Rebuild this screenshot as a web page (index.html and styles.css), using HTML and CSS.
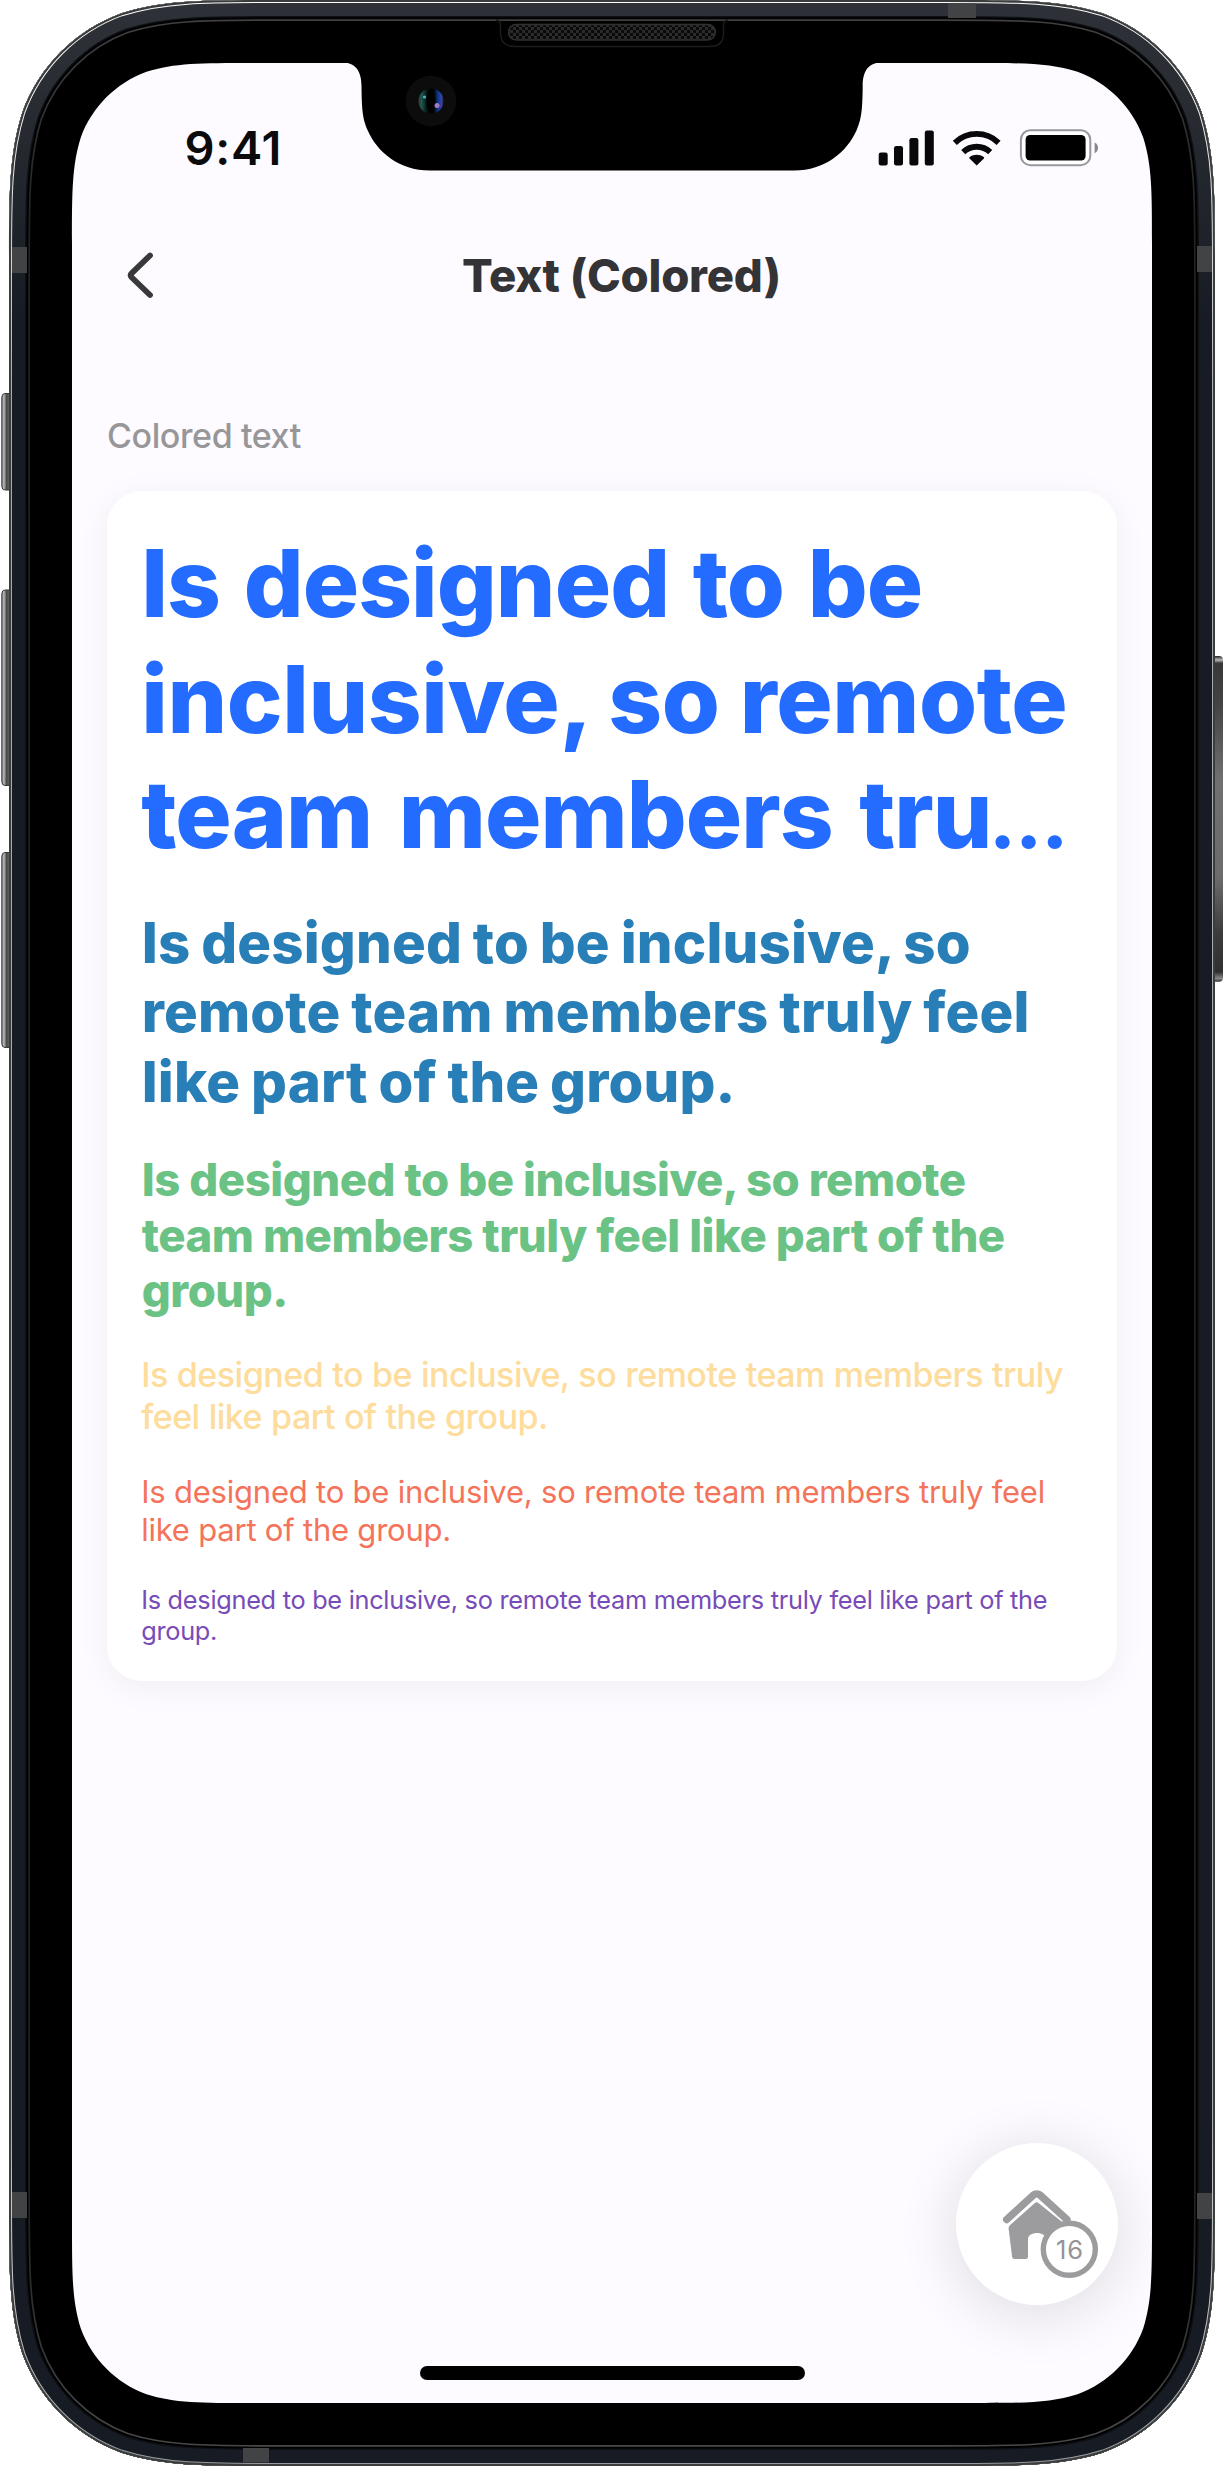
FILE: index.html
```html
<!DOCTYPE html>
<html lang="en">
<head>
<meta charset="utf-8">
<title>Text (Colored)</title>
<link rel="stylesheet" href="styles.css">
</head>
<body>
<div class="phone">
  <main class="screen">
    <div class="status">
      <span class="clock">9:41</span>
      <svg class="status-icons" width="222" height="40" viewBox="877 128 222 40" aria-hidden="true">
        <g fill="#08080a">
          <rect x="878.7" y="152.6" width="9" height="12.8" rx="2.2"/>
          <rect x="894" y="146" width="9" height="19.4" rx="2.2"/>
          <rect x="909.4" y="138" width="9" height="27.4" rx="2.2"/>
          <rect x="924.8" y="130.4" width="9" height="35" rx="2.2"/>
          <path d="M976.7 165.4l-7.2-6.8a1 1 0 0 1 .2-1.5c4.2-3.1 9.8-3.1 14 0a1 1 0 0 1 .2 1.5z"/>
        </g>
        <g fill="none" stroke="#08080a" stroke-width="5.8">
          <path d="M963.2 152.2a19.4 19.4 0 0 1 27 0"/>
          <path d="M954.8 142.8a31.5 31.5 0 0 1 43.8 0"/>
        </g>
        <rect x="1020.9" y="130.2" width="69.4" height="35" rx="9.5" fill="#fff" stroke="#98979b" stroke-width="2"/>
        <rect x="1025.6" y="135" width="60" height="25.6" rx="4.6" fill="#000"/>
        <path d="M1094.6 142.6c4.6 2 4.6 8.6 0 10.6z" fill="#88878b"/>
      </svg>
    </div>
    <header class="nav">
      <svg class="back" width="32" height="48" viewBox="124 251 32 48" aria-hidden="true">
        <path d="M150 255.5L131.3 273.6a2.3 2.3 0 0 0 0 3.4l18.7 18" fill="none" stroke="#39383b" stroke-width="5.8" stroke-linecap="round"/>
      </svg>
      <h1 class="title">Text (Colored)</h1>
    </header>
    <h2 class="caption">Colored text</h2>
    <section class="card">
      <p class="display">Is designed to be<br><span class="wide">inclusive, so remote</span><br><span class="last">team members tru<span class="dots">…</span></span></p>
      <p class="heading">Is designed to be inclusive, so<br>remote team members truly feel<br>like part of the group.</p>
      <p class="subheading">Is designed to be inclusive, so remote<br>team members truly feel like part of the<br>group.</p>
      <p class="body">Is designed to be inclusive, so remote team members truly<br>feel like part of the group.</p>
      <p class="callout">Is designed to be inclusive, so remote team members truly feel<br>like part of the group.</p>
      <p class="footnote">Is designed to be inclusive, so remote team members truly feel like part of the<br>group.</p>
    </section>
    <div class="fab">
      <svg width="162" height="162" viewBox="956 2143 162 162" aria-hidden="true">
        <path d="M1034.6 2203.2a3 3 0 0 1 4.2 0l25.2 20.3v35.3h-18.3v-19.5c0-4-4-6.2-8.7-6.2s-9 2.2-9 6.2v17.2q0 2.5-2.6 2.5h-10.8q-2.3 0-2.5-2.3l-3.5-28q-.2-2 1.5-3.7z" fill="#9c9b9e"/>
        <path d="M1006.7 2219.5l26.8-24.4a5 5 0 0 1 6.6 0l26.8 24.4" fill="none" stroke="#9c9b9e" stroke-width="7.4" stroke-linecap="round"/>
        <circle cx="1069.3" cy="2249.2" r="26" fill="#fff" stroke="#9c9b9e" stroke-width="5.4"/>
      </svg>
      <span class="count">16</span>
    </div>
    <div class="indicator"></div>
  </main>
  <svg class="frame" width="1224" height="2466" viewBox="0 0 1224 2466" aria-hidden="true">
    <defs>
      <path id="body" d="M9 272.1c0-78.4 0-117.5 13.3-159.7c16.8-46 53-82.3 99.1-99.1c42.2-13.3 81.3-13.3 159.7-13.3H942.9c78.4 0 117.5 0 159.7 13.3c46 16.8 82.3 53 99.1 99.1c13.3 42.2 13.3 81.3 13.3 159.7V2193.9c0 78.4 0 117.5-13.3 159.7c-16.8 46-53 82.3-99.1 99.1c-42.2 13.3-81.3 13.3-159.7 13.3H281.1c-78.4 0-117.5 0-159.7-13.3c-46-16.8-82.3-53-99.1-99.1c-13.3-42.2-13.3-81.3-13.3-159.7z"/>
      <clipPath id="bodyClip"><use href="#body"/></clipPath>
      <linearGradient id="navy" gradientUnits="userSpaceOnUse" x1="0" y1="0" x2="0" y2="320">
        <stop offset="0" stop-color="#2e3137"/><stop offset=".3" stop-color="#292c32"/><stop offset="1" stop-color="#171c24"/>
      </linearGradient>
      <linearGradient id="shine" gradientUnits="userSpaceOnUse" x1="0" y1="0" x2="0" y2="2466">
        <stop offset="0" stop-color="#fff"/><stop offset=".1" stop-color="#d5d8da"/><stop offset=".16" stop-color="#a9abb2"/><stop offset=".86" stop-color="#a9abb2"/><stop offset=".91" stop-color="#d0d0d0"/><stop offset="1" stop-color="#96999c"/>
      </linearGradient>
      <linearGradient id="seam" gradientUnits="userSpaceOnUse" x1="0" y1="0" x2="0" y2="2466">
        <stop offset="0" stop-color="#434343"/><stop offset=".09" stop-color="#222"/><stop offset=".9" stop-color="#222"/><stop offset="1" stop-color="#4c4c4c"/>
      </linearGradient>
      <linearGradient id="left" x1="0" x2="1" y1="0" y2="0">
        <stop offset="0" stop-color="#777"/><stop offset=".22" stop-color="#b4b7b7"/><stop offset=".4" stop-color="#8f9191"/><stop offset=".55" stop-color="#494949"/><stop offset="1" stop-color="#686868"/>
      </linearGradient>
      <linearGradient id="right" x1="0" x2="0" y1="0" y2="1">
        <stop offset="0" stop-color="#222"/><stop offset=".012" stop-color="#bbb"/><stop offset=".022" stop-color="#383838"/><stop offset=".15" stop-color="#444"/><stop offset=".38" stop-color="#707070"/><stop offset=".68" stop-color="#6c6c6c"/><stop offset=".85" stop-color="#3c3c3c"/><stop offset=".97" stop-color="#303030"/><stop offset=".99" stop-color="#888"/><stop offset="1" stop-color="#333"/>
      </linearGradient>
      <linearGradient id="lens" x1="0" x2="1" y1="0" y2="0">
        <stop offset="0" stop-color="#333"/><stop offset=".12" stop-color="#1d5a50"/><stop offset=".35" stop-color="#04100f"/><stop offset=".6" stop-color="#000"/><stop offset=".78" stop-color="#0b3a86"/><stop offset=".92" stop-color="#3b3fb0"/><stop offset="1" stop-color="#222"/>
      </linearGradient>
      <pattern id="mesh" width="6" height="6" patternUnits="userSpaceOnUse">
        <rect width="6" height="6" fill="#0a0a0a"/><rect width="3" height="3" fill="#2b2b2b"/><rect x="3" y="3" width="3" height="3" fill="#2b2b2b"/>
      </pattern>
    </defs>
    <g fill="url(#left)" stroke="#3b3d3d" stroke-width="1">
      <path d="M10 393.5H5q-3.2 0-3.2 4v88.5q0 4 3.2 4h5z"/>
      <path d="M10 590H5q-3.2 0-3.2 4v187.5q0 4 3.2 4h5z"/>
      <path d="M10 852.5H5q-3.2 0-3.2 4v187q0 4 3.2 4h5z"/>
    </g>
    <path d="M1214 656h5q4 0 4 4v317.7q0 4-4 4h-5z" fill="url(#right)"/>
    <path fill-rule="evenodd" d="M9 272.1c0-78.4 0-117.5 13.3-159.7c16.8-46 53-82.3 99.1-99.1c42.2-13.3 81.3-13.3 159.7-13.3H942.9c78.4 0 117.5 0 159.7 13.3c46 16.8 82.3 53 99.1 99.1c13.3 42.2 13.3 81.3 13.3 159.7V2193.9c0 78.4 0 117.5-13.3 159.7c-16.8 46-53 82.3-99.1 99.1c-42.2 13.3-81.3 13.3-159.7 13.3H281.1c-78.4 0-117.5 0-159.7-13.3c-46-16.8-82.3-53-99.1-99.1c-13.3-42.2-13.3-81.3-13.3-159.7zM72 243.4c0-51.9 0-77.9 8.8-105.9c11.1-30.5 35.2-54.6 65.7-65.7c28-8.8 53.9-8.8 105.9-8.8H971.6c51.9 0 77.9 0 105.9 8.8c30.5 11.1 54.6 35.2 65.7 65.7c8.8 28 8.8 53.9 8.8 105.9V2222.6c0 51.9 0 77.9-8.8 105.9c-11.1 30.5-35.2 54.6-65.7 65.7c-28 8.8-53.9 8.8-105.9 8.8H252.4c-51.9 0-77.9 0-105.9-8.8c-30.5-11.1-54.6-35.2-65.7-65.7c-8.8-28-8.8-53.9-8.8-105.9z"/>
    <g fill="none" clip-path="url(#bodyClip)">
      <use href="#body" stroke="url(#seam)" stroke-width="42"/>
      <use href="#body" stroke="#000" stroke-width="38.6"/>
      <use href="#body" stroke="#0c0f13" stroke-width="35"/>
      <use href="#body" stroke="url(#navy)" stroke-width="32"/>
      <use href="#body" stroke="url(#shine)" stroke-width="6"/>
      <use href="#body" stroke="#3b3d3d" stroke-width="4"/>
    </g>
    <g fill="#414345">
      <path d="M12 247h15v26H12zM1197 246h15v26h-15zM948 3.5h28V18h-28zM12 2192h15v26H12zM1197 2193h15v26h-15zM243 2448h26v14.5h-26z"/>
    </g>
    <path d="M343 62.5C357 63 361.5 73 361.5 86C361.8 108 362.3 118 367.5 130C377 152 399 170.5 430 170.5H794C825 170.5 847 152 856.7 130C861.9 118 862.4 108 862.7 86C862.7 73 867 63 881 62.5z"/>
    <path d="M496 20q4.500 0 4.500 5v8q0 13.500 13.500 13.500h196q13.500 0 13.500-13.500v-8q0-5 4.500-5" fill="none" stroke="#1d1d1d" stroke-width="1.400"/>
    <rect x="508.500" y="24.500" width="207" height="15.500" rx="7.700" fill="url(#mesh)" stroke="#303030" stroke-width="1.500"/>
    <circle cx="431" cy="101" r="25.300" fill="#0c0c0c"/>
    <circle cx="431" cy="101" r="12.600" fill="url(#lens)"/>
    <ellipse cx="431" cy="101" rx="4.500" ry="12" fill="#000"/>
    <circle cx="424.500" cy="97" r="1.600" fill="#4bb5c8"/>
    <circle cx="437" cy="105.500" r="2.500" fill="#a578c0"/>
  </svg>
</div>
</body>
</html>
```
FILE: styles.css
```css
* {
  box-sizing: border-box;
}

body {
  margin: 0;
  background: #fff;
  font-family: Inter, "Liberation Sans", sans-serif;
}

h1, h2, p {
  margin: 0;
}

svg {
  display: block;
}

.phone {
  position: relative;
  width: 1224px;
  height: 2466px;
  padding: 63px 72px;
}

.frame {
  position: absolute;
  inset: 0;
}

.screen {
  position: relative;
  display: flex;
  flex-direction: column;
  width: 1080px;
  height: 2340px;
  padding: 0 34.6px 0 35px;
  background: #fdfbff;
  border-radius: 110px;
  overflow: hidden;
}

.status {
  display: flex;
  justify-content: space-between;
  align-items: flex-start;
  height: 160px;
  padding: 65px 18.4px 0 77.5px;
}

.clock {
  font-size: 47px;
  font-weight: 600;
  line-height: 39.5px;
  letter-spacing: 0.7px;
  color: #0b0b0d;
}

.nav {
  display: flex;
  align-items: center;
  height: 105px;
  padding-left: 17px;
}

.back {
  margin-top: -1px;
}

.title {
  margin-left: 306px;
  font-size: 45.5px;
  font-weight: 800;
  line-height: 56px;
  letter-spacing: -0.234px;
  word-spacing: 0.33px;
  white-space: nowrap;
  color: #343336;
}

.caption {
  margin-top: 87px;
  font-size: 34px;
  font-weight: 500;
  line-height: 42px;
  letter-spacing: -0.4px;
  color: #979699;
}

.card {
  display: flex;
  flex-direction: column;
  gap: 35px;
  height: 1190.4px;
  margin-top: 34px;
  padding: 35.2px 34.7px;
  border-radius: 35px;
  background: #fff;
  box-shadow: 0 6px 34px rgba(40, 20, 60, 0.055);
  white-space: nowrap;
}

.display {
  margin-left: -0.5px;
  font-size: 94px;
  font-weight: 800;
  line-height: 115.5px;
  letter-spacing: -0.95px;
  word-spacing: 4px;
  color: #246bff;
}

.display .wide {
  letter-spacing: -0.4px;
  word-spacing: 0;
}

.display .last {
  letter-spacing: -0.95px;
  word-spacing: 7px;
}

.display .dots {
  margin-left: -2px;
  font-size: 70px;
  font-weight: 900;
  line-height: 1;
}

.heading {
  font-size: 56.3px;
  font-weight: 800;
  line-height: 69.7px;
  letter-spacing: 0.18px;
  word-spacing: -1.7px;
  color: #287eb7;
}

.subheading {
  font-size: 45.5px;
  font-weight: 800;
  line-height: 55.7px;
  letter-spacing: -0.48px;
  color: #6bc285;
}

.body {
  margin-left: -0.5px;
  font-size: 34px;
  font-weight: 500;
  line-height: 42.1px;
  letter-spacing: -0.5px;
  word-spacing: 0.45px;
  color: #fddc9c;
}

.callout {
  margin-left: -0.5px;
  font-size: 31px;
  line-height: 38.2px;
  letter-spacing: -0.217px;
  color: #f5735a;
}

.footnote {
  margin-left: -0.5px;
  padding-top: 0.8px;
  font-size: 25.3px;
  line-height: 30.6px;
  letter-spacing: -0.277px;
  color: #774bb8;
}

.fab {
  position: absolute;
  left: 884px;
  top: 2080px;
  width: 162px;
  height: 162px;
  border-radius: 50%;
  background: #fff;
  box-shadow: 0 8px 60px rgba(30, 20, 40, 0.14);
}

.count {
  position: absolute;
  left: 87px;
  top: 91px;
  width: 54px;
  font-size: 25.5px;
  line-height: 31px;
  letter-spacing: 0.8px;
  text-align: center;
  color: #949396;
}

.indicator {
  align-self: center;
  width: 385px;
  height: 14px;
  margin: auto 0 23px;
  border-radius: 7px;
  background: #000;
}
```
